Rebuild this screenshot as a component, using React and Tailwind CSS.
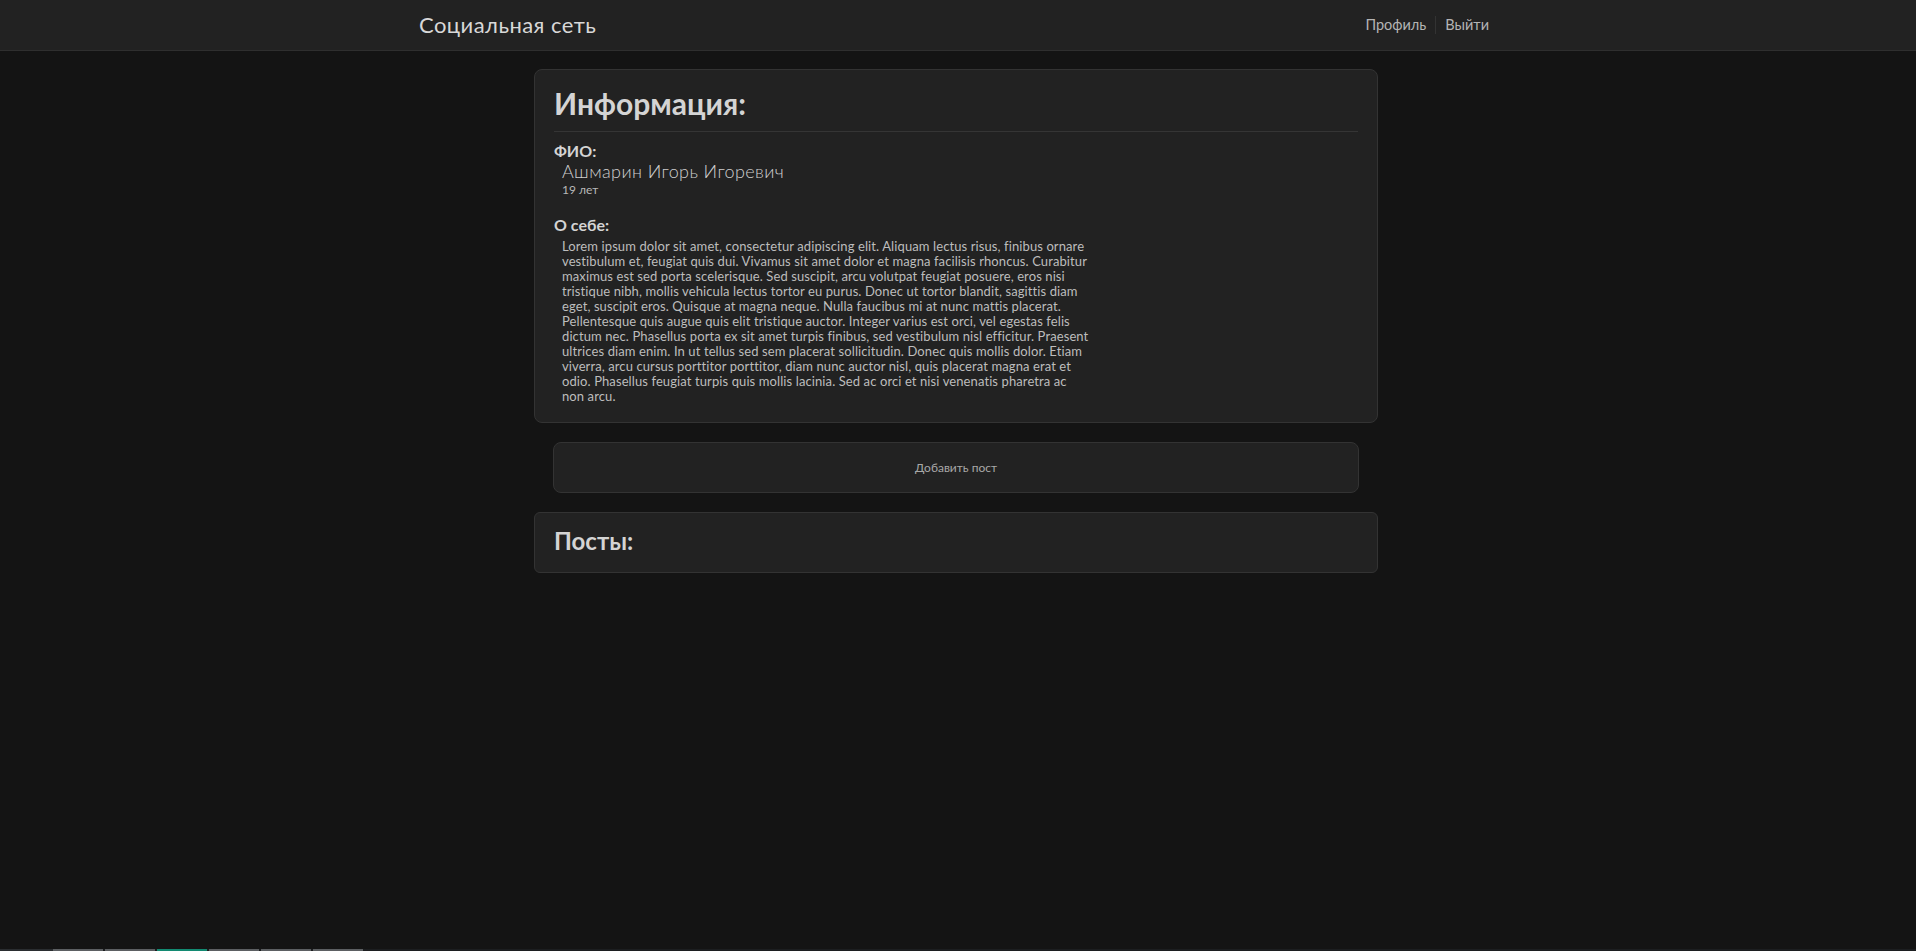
import React from "react";

const lines = [
  "Lorem ipsum dolor sit amet, consectetur adipiscing elit. Aliquam lectus risus, finibus ornare",
  "vestibulum et, feugiat quis dui. Vivamus sit amet dolor et magna facilisis rhoncus. Curabitur",
  "maximus est sed porta scelerisque. Sed suscipit, arcu volutpat feugiat posuere, eros nisi",
  "tristique nibh, mollis vehicula lectus tortor eu purus. Donec ut tortor blandit, sagittis diam",
  "eget, suscipit eros. Quisque at magna neque. Nulla faucibus mi at nunc mattis placerat.",
  "Pellentesque quis augue quis elit tristique auctor. Integer varius est orci, vel egestas felis",
  "dictum nec. Phasellus porta ex sit amet turpis finibus, sed vestibulum nisl efficitur. Praesent",
  "ultrices diam enim. In ut tellus sed sem placerat sollicitudin. Donec quis mollis dolor. Etiam",
  "viverra, arcu cursus porttitor porttitor, diam nunc auctor nisl, quis placerat magna erat et",
  "odio. Phasellus feugiat turpis quis mollis lacinia. Sed ac orci et nisi venenatis pharetra ac",
  "non arcu.",
];

export default function App() {
  return (
    <div className="min-h-[951px] bg-[#141414] flex flex-col font-['Lato','Open_Sans',sans-serif]">
      <nav className="h-[51px] bg-[#222222] border-b border-[#2f2f2f]">
        <div className="w-[1140px] mx-auto h-full px-[31px] flex items-center justify-between">
          <span className="text-[22px] tracking-[0.45px] text-[#d8d8d8] leading-none">Социальная сеть</span>
          <div className="flex items-center text-[14.5px] text-[#b4b4b4]">
            <span className="px-[9px]">Профиль</span>
            <span className="w-px h-[18px] bg-[#333333]"></span>
            <span className="pl-[9px] pr-[8px]">Выйти</span>
          </div>
        </div>
      </nav>

      <main className="flex-1">
        <div className="w-[844px] ml-[calc(50%-424px)] mt-[18px] flex flex-col gap-[19px]">
          <section className="bg-[#222222] border border-[#333333] rounded-[8px] px-[19px] pt-[15px] pb-[18px]">
            <h2 className="text-[30px] leading-[36px] font-bold text-[#d4d4d4]">Информация:</h2>
            <div className="mt-[10px] border-t border-[#353535]"></div>
            <div className="mt-[9px] text-[16px] leading-[20px] font-bold text-[#d4d4d4]">ФИО:</div>
            <div className="pl-[8px]">
              <div className="text-[18px] leading-[21px] tracking-[0.4px] font-light text-[#cfcfcf]">Ашмарин Игорь Игоревич</div>
              <div className="text-[12px] leading-[15px] text-[#b8b8b8]">19 лет</div>
            </div>
            <div className="mt-[18px] text-[16px] leading-[20px] font-bold text-[#d4d4d4]">О себе:</div>
            <p className="mt-[4px] pl-[8px] text-[13px] leading-[15px] tracking-[0.1px] text-[#bdbdbd]">
              {lines.map((l, i) => (
                <React.Fragment key={i}>
                  {l}
                  {i < lines.length - 1 && <br />}
                </React.Fragment>
              ))}
            </p>
          </section>

          <div className="px-[19px]">
            <button className="w-full h-[51px] bg-[#222222] border border-[#333333] rounded-[8px] text-[12px] text-[#a8a8a8] flex items-center justify-center">
              Добавить пост
            </button>
          </div>

          <section className="bg-[#222222] border border-[#333333] rounded-[6px] px-[19px] pt-[13px] pb-[17px]">
            <h3 className="text-[24px] leading-[29px] font-bold text-[#d4d4d4]">Посты:</h3>
          </section>
        </div>
      </main>

      <div className="h-[2px] flex bg-[#1c1e20]">
        <div className="w-[53px] bg-[#2a2d30]"></div>
        <div className="w-[50px] bg-[#5c5f62]"></div>
        <div className="w-[2px]"></div>
        <div className="w-[50px] bg-[#5c5f62]"></div>
        <div className="w-[2px]"></div>
        <div className="w-[50px] bg-[#138a72]"></div>
        <div className="w-[2px]"></div>
        <div className="w-[50px] bg-[#5c5f62]"></div>
        <div className="w-[2px]"></div>
        <div className="w-[50px] bg-[#5c5f62]"></div>
        <div className="w-[2px]"></div>
        <div className="w-[50px] bg-[#5c5f62]"></div>
      </div>
    </div>
  );
}
